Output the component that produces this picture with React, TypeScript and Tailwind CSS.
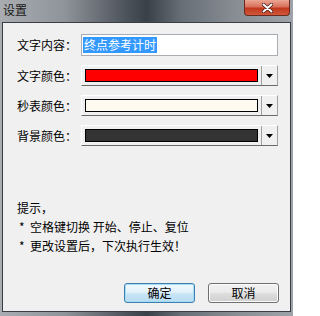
import React from 'react';

const FONT = { fontFamily: '"Noto Sans CJK SC", "Noto Sans", sans-serif' };

const ColorCombo: React.FC<{ swatch: string }> = ({ swatch }) => (
  <div className="flex h-[21px] w-[197px] border border-t-[#ffffff] border-l-[#ffffff] border-r-[#a0a0a0] border-b-[#696969] bg-[#f0f0f0]">
    <div className="flex flex-1 items-center pl-[3px] pr-[3px]">
      <div className={`h-[13px] w-full border border-black ${swatch}`} />
    </div>
    <div className="flex w-[16px] items-center justify-center border-l border-l-[#a0a0a0]">
      <svg width="7" height="4" viewBox="0 0 7 4">
        <path d="M0 0h7L3.5 4z" fill="#000" />
      </svg>
    </div>
  </div>
);

const Row: React.FC<{ label: string; children: React.ReactNode }> = ({ label, children }) => (
  <div className="flex items-center">
    <span className="w-[64px] text-[12px] leading-none text-black">{label}</span>
    {children}
  </div>
);

export default function App() {
  return (
    <div
      className="flex h-[316px] w-[293px] flex-col bg-[linear-gradient(90deg,#a9adb2_0%,#8f949a_22%,#50565e_42%,#3a4048_50%,#686e76_62%,#878d93_80%,#9ea3a9_100%)]"
      style={FONT}
    >
      <div className="relative flex h-[22px] items-start">
        <span className="ml-[3px] mt-[3px] text-[12px] leading-[14px] text-[#1a1a1a]">设置</span>
        <div className="absolute right-[3px] top-0 flex h-[16px] w-[46px] items-center justify-center rounded-b-[4px] border border-t-0 border-[#6b2a20] bg-[linear-gradient(180deg,#eba595_0%,#d9705a_45%,#c0381e_55%,#d0583a_100%)]">
          <svg width="11" height="10" viewBox="0 0 11 10">
            <path d="M1.5 1.5l8 7M9.5 1.5l-8 7" stroke="#3a1510" strokeWidth="3.4" strokeLinecap="round" />
            <path d="M1.5 1.5l8 7M9.5 1.5l-8 7" stroke="#ffffff" strokeWidth="2" strokeLinecap="round" />
          </svg>
        </div>
      </div>
      <div className="mx-[2px] mb-[4px] flex flex-1 flex-col border border-[#3a3e44] bg-[#f0f0f0] pl-[14px] pr-[11px]">
        <div className="mt-[11px] flex flex-col gap-[9px]">
          <Row label="文字内容：">
            <div className="flex h-[22px] w-[197px] items-center border border-[#abadb3] border-t-[#a5acb5] bg-white pl-[1px]">
              <span className="bg-[#3399ff] px-[1px] text-[12px] leading-[16px] text-white">终点参考计时</span>
            </div>
          </Row>
          <Row label="文字颜色：">
            <ColorCombo swatch="bg-[#ff0000]" />
          </Row>
          <Row label="秒表颜色：">
            <ColorCombo swatch="bg-[#fffaf0]" />
          </Row>
          <Row label="背景颜色：">
            <ColorCombo swatch="bg-[#333333]" />
          </Row>
        </div>
        <div className="mt-[55px] flex flex-col gap-[6px] text-[12px] leading-[13px] text-black">
          <span>提示，</span>
          <span className="ml-[2px]">*&nbsp; 空格键切换 开始、停止、复位</span>
          <span className="ml-[2px]">*&nbsp; 更改设置后，下次执行生效！</span>
        </div>
        <div className="mt-auto mb-[8px] flex justify-end gap-[13px]">
          <button className="h-[20px] w-[71px] rounded-[3px] border border-[#3c7fb1] bg-[linear-gradient(180deg,#f2f9fd_0%,#e3f1fa_45%,#c7e4f6_55%,#b9dcf2_100%)] text-[12px] leading-none text-black shadow-[inset_0_0_0_1px_#a6dcf6]">
            确定
          </button>
          <button className="h-[20px] w-[71px] rounded-[3px] border border-[#707070] bg-[linear-gradient(180deg,#f2f2f2_0%,#ebebeb_45%,#dddddd_55%,#cfcfcf_100%)] text-[12px] leading-none text-black shadow-[inset_0_0_0_1px_#fcfcfc]">
            取消
          </button>
        </div>
      </div>
    </div>
  );
}
